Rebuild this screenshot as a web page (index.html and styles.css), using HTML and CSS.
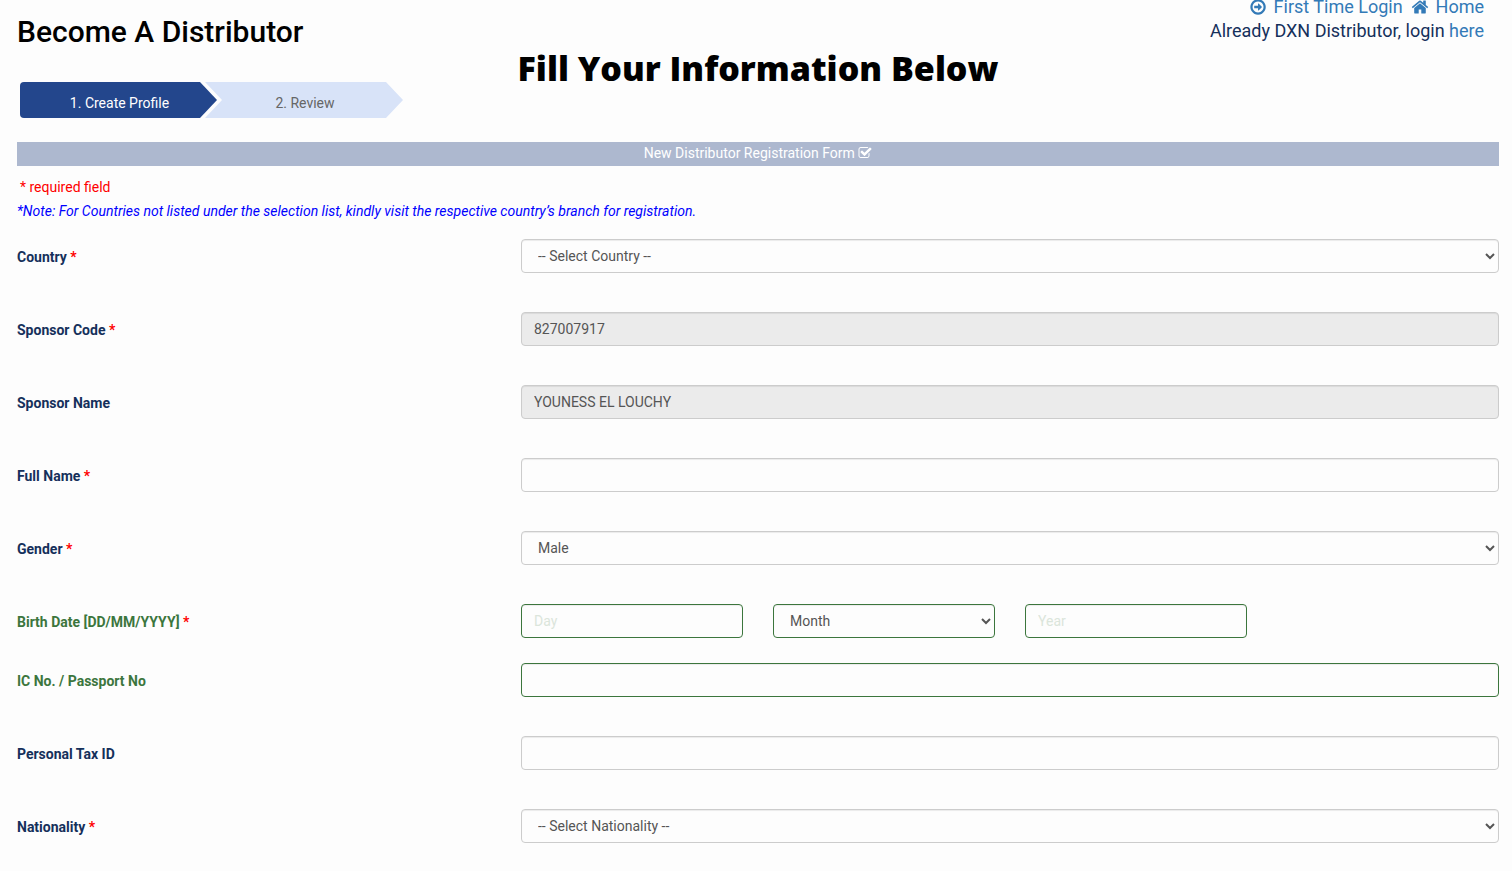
FILE: index.html
```html
<!DOCTYPE html>
<html lang="en">
<head>
  <meta charset="UTF-8">
  <meta name="viewport" content="width=device-width, initial-scale=1">
  <title>Become A Distributor</title>
  <link rel="stylesheet" href="styles.css">
</head>
<body>
  <header class="header">
    <div class="header-left">
      <h1>Become A Distributor</h1>
      <ol class="steps">
        <li class="step active">1. Create Profile</li>
        <li class="step">2. Review</li>
      </ol>
    </div>

    <h2 class="headline">Fill Your Information Below</h2>

    <div class="header-links">
      <div>
        <a class="top-link" href="#"><svg class="icon" viewBox="0 0 1792 1792"><path d="M1285 896q0 14-9 23l-320 320q-9 9-23 9-13 0-22.500-9.500t-9.500-22.500v-192h-352q-13 0-22.500-9.500t-9.500-22.500v-192q0-13 9.500-22.500t22.500-9.500h352v-192q0-14 9-23t23-9q12 0 24 10l319 319q9 9 9 23zm160 0q0-148-73-273t-198-198-273-73-273 73-198 198-73 273 73 273 198 198 273 73 273-73 198-198 73-273zm224 0q0 209-103 385.500t-279.500 279.500-385.500 103-385.500-103-279.500-279.500-103-385.500 103-385.500 279.500-279.500 385.500-103 385.500 103 279.500 279.500 103 385.500z"/></svg> First Time Login</a>
        <a href="#"><svg class="icon" viewBox="0 0 1792 1792"><path d="M1472 992v480q0 26-19 45t-45 19h-384v-384h-256v384h-384q-26 0-45-19t-19-45v-480q0-1 .5-3t.5-3l575-474 575 474q1 2 1 6zm223-69l-62 74q-8 9-21 11h-3q-13 0-21-7l-692-577-692 577q-12 8-24 7-13-2-21-11l-62-74q-8-10-7-23.500t11-21.500l719-599q32-26 76-26t76 26l244 204v-195q0-14 9-23t23-9h192q14 0 23 9t9 23v408l219 182q10 8 11 21.500t-7 23.500z"/></svg> Home</a>
      </div>
      <div>Already DXN Distributor, login <a href="#">here</a></div>
    </div>
  </header>

  <main>
    <div class="form-title">New Distributor Registration Form <svg class="icon-small" viewBox="0 0 1792 1792"><path d="M1472 930v318q0 119-84.500 203.500t-203.500 84.500h-832q-119 0-203.500-84.500t-84.500-203.500v-832q0-119 84.500-203.500t203.500-84.500h832q63 0 117 25 15 7 18 23 3 17-9 29l-49 49q-10 10-23 10-3 0-9-2-23-6-45-6h-832q-66 0-113 47t-47 113v832q0 66 47 113t113 47h832q66 0 113-47t47-113v-254q0-13 9-22l64-64q10-10 23-10 6 0 12 3 20 8 20 29zm231-489l-814 814q-24 24-57 24t-57-24l-430-430q-24-24-24-57t24-57l110-110q24-24 57-24t57 24l263 263 647-647q24-24 57-24t57 24l110 110q24 24 24 57t-24 57z"/></svg></div>

    <p class="required-note">* required field</p>
    <p class="country-note">*Note: For Countries not listed under the selection list, kindly visit the respective country’s branch for registration.</p>

    <form id="registerForm">
      <div class="form-row">
        <label for="country">Country <span class="required">*</span></label>
        <select id="country" class="form-control">
          <option value="">-- Select Country --</option>
        </select>
      </div>

      <div class="form-row">
        <label for="sponsorCode">Sponsor Code <span class="required">*</span></label>
        <input type="text" id="sponsorCode" class="form-control" value="827007917" readonly>
      </div>

      <div class="form-row">
        <label for="sponsorName">Sponsor Name</label>
        <input type="text" id="sponsorName" class="form-control" value="YOUNESS EL LOUCHY" readonly>
      </div>

      <div class="form-row">
        <label for="fullName">Full Name <span class="required">*</span></label>
        <input type="text" id="fullName" class="form-control">
      </div>

      <div class="form-row">
        <label for="gender">Gender <span class="required">*</span></label>
        <select id="gender" class="form-control">
          <option>Male</option>
          <option>Female</option>
        </select>
      </div>

      <div class="form-row valid compact">
        <label for="birthDay">Birth Date [DD/MM/YYYY] <span class="required">*</span></label>
        <div class="date-fields">
          <input type="text" id="birthDay" class="form-control" placeholder="Day" aria-label="Day">
          <select id="birthMonth" class="form-control" aria-label="Month">
            <option value="">Month</option>
          </select>
          <input type="text" id="birthYear" class="form-control" placeholder="Year" aria-label="Year">
        </div>
      </div>

      <div class="form-row valid">
        <label for="passport">IC No. / Passport No</label>
        <input type="text" id="passport" class="form-control">
      </div>

      <div class="form-row">
        <label for="taxId">Personal Tax ID</label>
        <input type="text" id="taxId" class="form-control">
      </div>

      <div class="form-row">
        <label for="nationality">Nationality <span class="required">*</span></label>
        <select id="nationality" class="form-control">
          <option value="">-- Select Nationality --</option>
        </select>
      </div>
    </form>
  </main>
</body>
</html>
```
FILE: styles.css
```css
* {
  box-sizing: border-box;
}

body {
  margin: 0;
  padding: 0 13px 0 17px;
  background-color: #fdfdfd;
  font-family: Roboto, "Liberation Sans", sans-serif;
  font-size: 14px;
  line-height: 24px;
  color: #15305b;
}

a {
  color: #337ab7;
  text-decoration: none;
}

.header {
  display: grid;
  grid-template-columns: 1fr auto 1fr;
}

h1 {
  margin: 14px 0 0;
  font-size: 30px;
  font-weight: 500;
  line-height: 36px;
  color: #000;
}

.headline {
  margin: 48px 0 0;
  font-family: "Arial Black", "Open Sans", sans-serif;
  font-size: 34px;
  font-weight: 900;
  line-height: 40px;
  color: #000;
}

.header-links {
  margin-top: -5px;
  padding-right: 15px;
  font-size: 18px;
  text-align: right;
}

.top-link {
  margin-right: 4px;
}

.icon {
  width: 18px;
  height: 18px;
  margin-right: 2px;
  vertical-align: -3px;
  fill: currentColor;
}

.icon-small {
  width: 14px;
  height: 14px;
  vertical-align: -2px;
  fill: currentColor;
}

/* progress arrows */
.steps {
  display: flex;
  margin: 32px 0 0;
  padding: 0 0 0 3px;
  list-style: none;
}

.step {
  width: 198px;
  height: 36px;
  padding: 3px 0 0 2px;
  line-height: 36px;
  text-align: center;
  color: #666;
  background-color: #d8e3f8;
  clip-path: polygon(0 0, 181px 0, 100% 50%, 181px 100%, 0 100%, 17px 50%);
}

.step.active {
  width: 197px;
  margin-right: -12px;
  color: #fff;
  background-color: #23468c;
  border-radius: 4px 0 0 4px;
  clip-path: polygon(0 0, 180px 0, 100% 50%, 180px 100%, 0 100%);
}

.form-title {
  margin-top: 24px;
  line-height: 22px;
  padding-bottom: 2px;
  text-align: center;
  color: #fff;
  background-color: #adb8cf;
}

.required-note {
  margin: 9px 0 0;
  padding-left: 3px;
  color: #f00;
}

.country-note {
  margin: 0 0 16px;
  font-style: italic;
  color: #00f;
}

.form-row {
  display: grid;
  grid-template-columns: repeat(12, 1fr);
  gap: 30px;
  margin-bottom: 39px;
}

.form-row.compact {
  margin-bottom: 25px;
}

label {
  grid-column: span 4;
  padding-top: 6px;
  font-weight: 700;
}

.required {
  color: #f00;
}

.form-control {
  grid-column: span 8;
  width: 100%;
  height: 34px;
  padding: 6px 12px;
  font-family: inherit;
  font-size: 14px;
  line-height: 20px;
  color: #555;
  background-color: #fdfdfd;
  border: 1px solid #ccc;
  border-radius: 4px;
  box-shadow: inset 0 1px 1px rgba(0, 0, 0, 0.075);
}

.form-control[readonly] {
  background-color: #ebebeb;
}

.date-fields {
  grid-column: span 8;
  display: grid;
  grid-template-columns: repeat(4, 1fr);
  gap: 30px;
}

.date-fields .form-control {
  grid-column: span 1;
}

.form-control::placeholder {
  color: #dbe5db;
}

.valid label {
  color: #3c763d;
}

.valid .required {
  color: #f00;
}

.valid .form-control {
  border-color: #3c763d;
}
```
